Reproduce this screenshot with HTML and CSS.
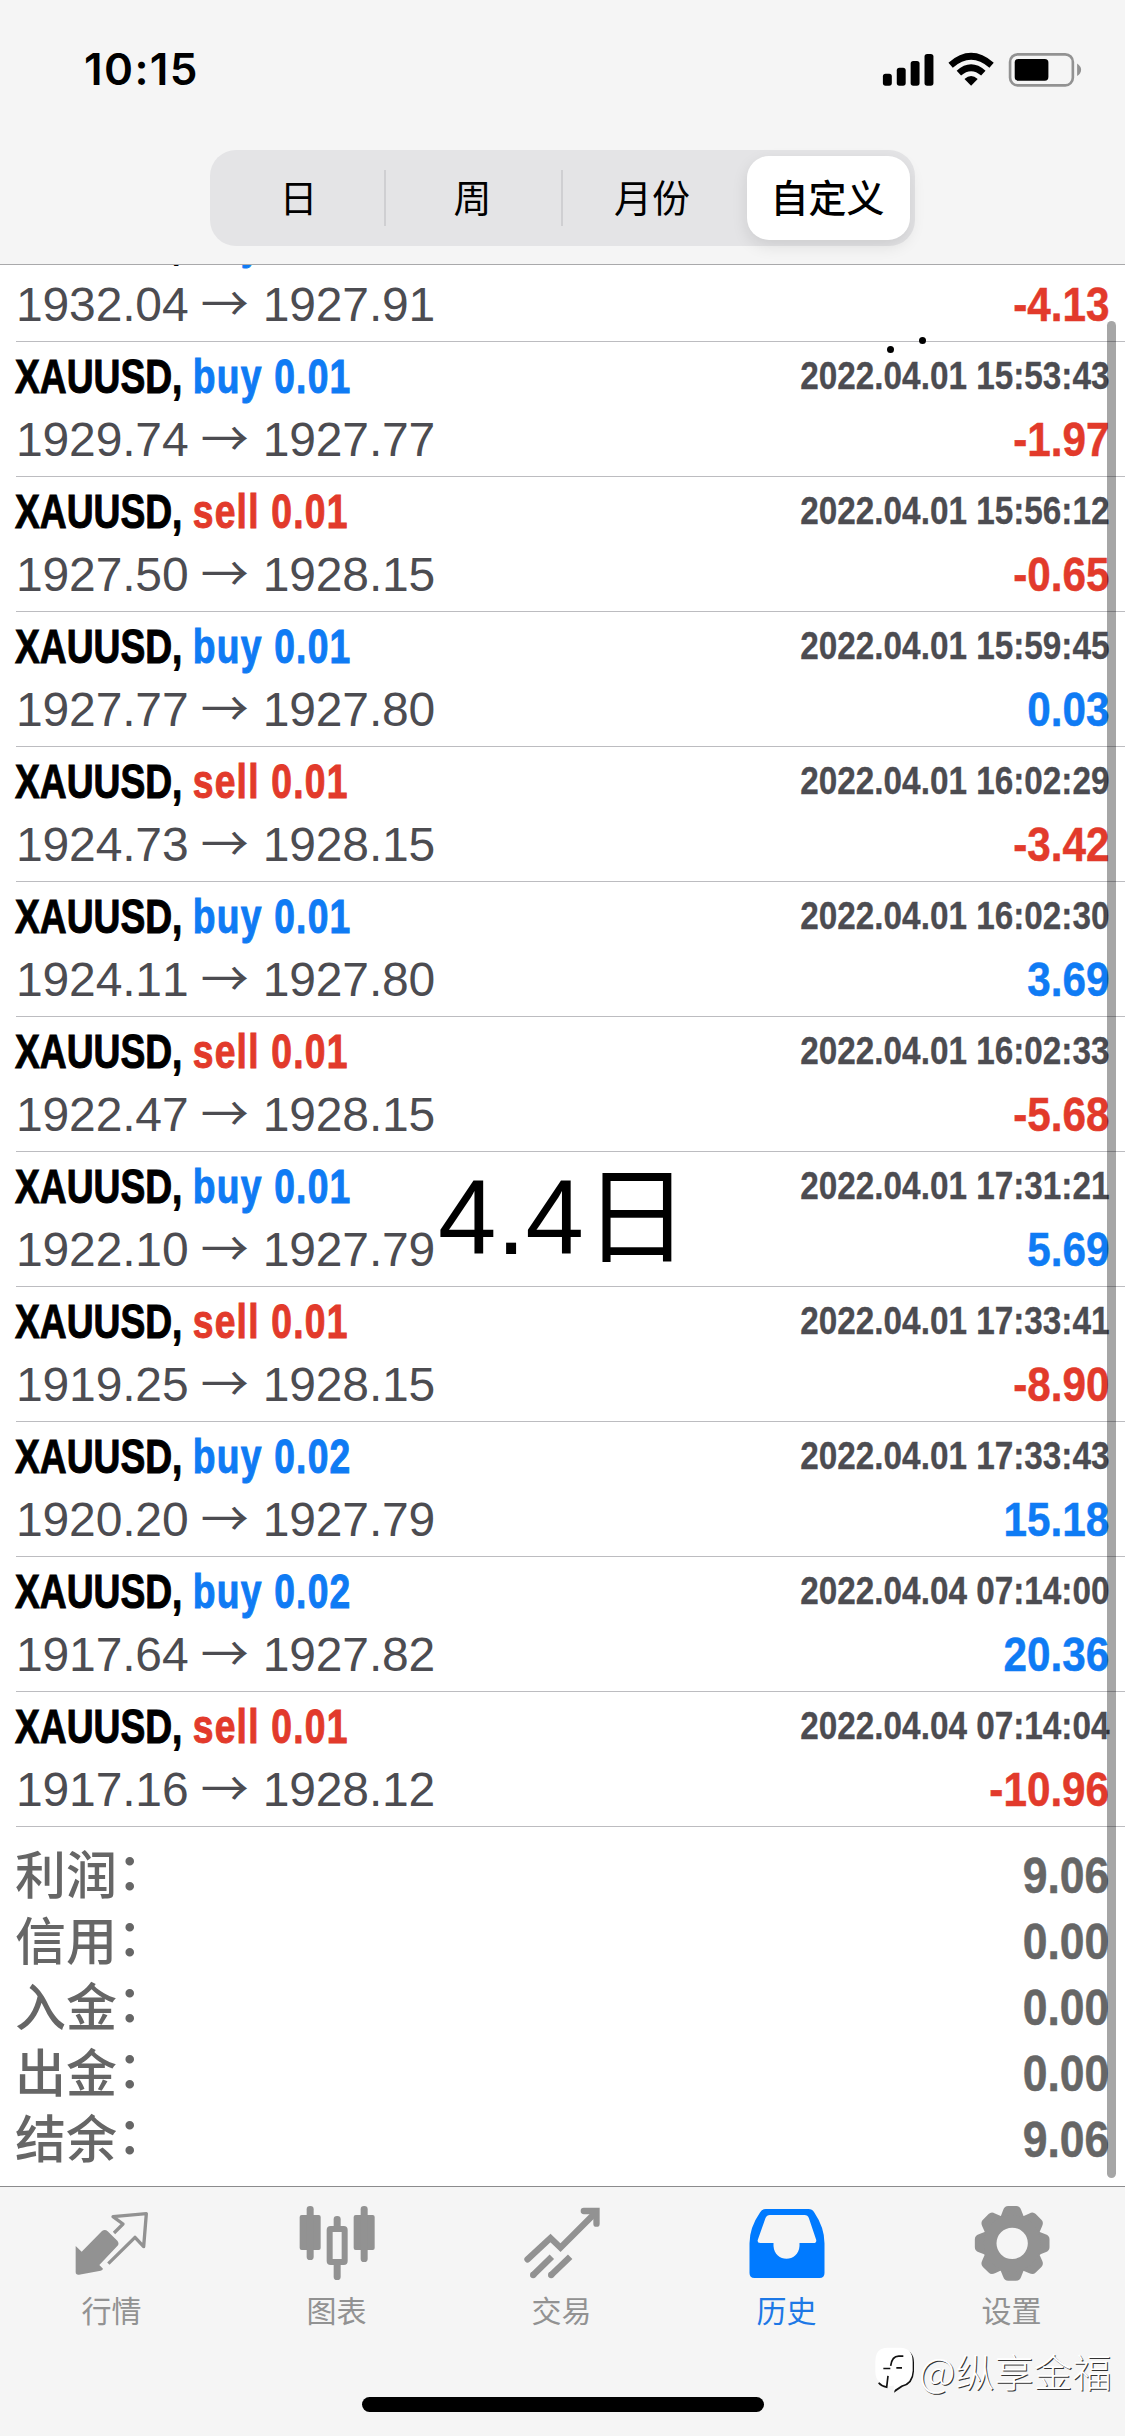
FILE: index.html
```html
<!DOCTYPE html>
<html lang="zh-CN">
<head>
<meta charset="utf-8">
<title>历史</title>
<link rel="stylesheet" href="styles.css">
</head>
<body>
<div class="screen">
  <header class="header">
    <div class="status">
      <span class="time">10:15</span>
      <svg class="status-icons" viewBox="60 60 612 112">
        <g fill="#000">
          <rect x="66" y="129" width="27" height="36" rx="8"/>
          <rect x="108" y="111" width="27" height="54" rx="8"/>
          <rect x="150" y="90" width="27" height="75" rx="8"/>
          <rect x="192" y="69" width="27" height="96" rx="8"/>
          <path d="M333 165 L313 145 Q333 126 353 145Z"/>
        </g>
        <g fill="none" stroke="#000" stroke-width="20">
          <path d="M296 127 Q333 94 370 127"/>
          <path d="M271 103 Q333 49 395 103"/>
        </g>
        <rect x="451" y="70" width="190" height="94" rx="23" fill="none" stroke="#929292" stroke-width="8"/>
        <rect x="465" y="84" width="102" height="66" rx="11" fill="#000"/>
        <path d="M654 98 Q666 106 666 117 Q666 128 654 136Z" fill="#929292"/>
      </svg>
    </div>
    <nav class="segments">
      <span class="segment">日</span>
      <span class="segment">周</span>
      <span class="segment">月份</span>
      <span class="segment selected">自定义</span>
    </nav>
  </header>

  <main class="history">
    <ul class="deals">
      <li class="deal"><div class="line"><span class="title">XAUUSD, <b class="buy">buy 0.01</b></span></div><div class="line"><span class="price">1932.04 <i>→</i> 1927.91</span><span class="amount loss">-4.13</span></div></li>
      <li class="deal"><div class="line"><span class="title">XAUUSD, <b class="buy">buy 0.01</b></span><span class="date">2022.04.01 15:53:43</span></div><div class="line"><span class="price">1929.74 <i>→</i> 1927.77</span><span class="amount loss">-1.97</span></div></li>
      <li class="deal"><div class="line"><span class="title">XAUUSD, <b class="sell">sell 0.01</b></span><span class="date">2022.04.01 15:56:12</span></div><div class="line"><span class="price">1927.50 <i>→</i> 1928.15</span><span class="amount loss">-0.65</span></div></li>
      <li class="deal"><div class="line"><span class="title">XAUUSD, <b class="buy">buy 0.01</b></span><span class="date">2022.04.01 15:59:45</span></div><div class="line"><span class="price">1927.77 <i>→</i> 1927.80</span><span class="amount gain">0.03</span></div></li>
      <li class="deal"><div class="line"><span class="title">XAUUSD, <b class="sell">sell 0.01</b></span><span class="date">2022.04.01 16:02:29</span></div><div class="line"><span class="price">1924.73 <i>→</i> 1928.15</span><span class="amount loss">-3.42</span></div></li>
      <li class="deal"><div class="line"><span class="title">XAUUSD, <b class="buy">buy 0.01</b></span><span class="date">2022.04.01 16:02:30</span></div><div class="line"><span class="price">1924.11 <i>→</i> 1927.80</span><span class="amount gain">3.69</span></div></li>
      <li class="deal"><div class="line"><span class="title">XAUUSD, <b class="sell">sell 0.01</b></span><span class="date">2022.04.01 16:02:33</span></div><div class="line"><span class="price">1922.47 <i>→</i> 1928.15</span><span class="amount loss">-5.68</span></div></li>
      <li class="deal"><div class="line"><span class="title">XAUUSD, <b class="buy">buy 0.01</b></span><span class="date">2022.04.01 17:31:21</span></div><div class="line"><span class="price">1922.10 <i>→</i> 1927.79</span><span class="amount gain">5.69</span></div></li>
      <li class="deal"><div class="line"><span class="title">XAUUSD, <b class="sell">sell 0.01</b></span><span class="date">2022.04.01 17:33:41</span></div><div class="line"><span class="price">1919.25 <i>→</i> 1928.15</span><span class="amount loss">-8.90</span></div></li>
      <li class="deal"><div class="line"><span class="title">XAUUSD, <b class="buy">buy 0.02</b></span><span class="date">2022.04.01 17:33:43</span></div><div class="line"><span class="price">1920.20 <i>→</i> 1927.79</span><span class="amount gain">15.18</span></div></li>
      <li class="deal"><div class="line"><span class="title">XAUUSD, <b class="buy">buy 0.02</b></span><span class="date">2022.04.04 07:14:00</span></div><div class="line"><span class="price">1917.64 <i>→</i> 1927.82</span><span class="amount gain">20.36</span></div></li>
      <li class="deal"><div class="line"><span class="title">XAUUSD, <b class="sell">sell 0.01</b></span><span class="date">2022.04.04 07:14:04</span></div><div class="line"><span class="price">1917.16 <i>→</i> 1928.12</span><span class="amount loss">-10.96</span></div></li>
    </ul>
    <dl class="summary">
      <div class="total"><dt>利润<span class="colon">：</span></dt><dd>9.06</dd></div>
      <div class="total"><dt>信用<span class="colon">：</span></dt><dd>0.00</dd></div>
      <div class="total"><dt>入金<span class="colon">：</span></dt><dd>0.00</dd></div>
      <div class="total"><dt>出金<span class="colon">：</span></dt><dd>0.00</dd></div>
      <div class="total"><dt>结余<span class="colon">：</span></dt><dd>9.06</dd></div>
    </dl>
  </main>

  <nav class="tabbar">
    <div class="tab">
      <svg class="tab-icon" viewBox="31 39 252 252">
        <path d="M45 168 L63 185 L124 123 Q133 116 141 124 L170 152 Q177 161 170 168 L116 225 L127 236 Q126 241 120 242 L55 254 Q45 255 45 246Z" fill="#929292"/>
        <path d="M160 129 L187 102 L157 80 L257 71 L249 170 L223 142 L143 221" fill="none" stroke="#929292" stroke-width="10" stroke-linejoin="round"/>
      </svg>
      <span class="tab-label">行情</span>
    </div>
    <div class="tab">
      <svg class="tab-icon" viewBox="706 39 252 252" fill="#929292">
        <rect x="717" y="75" width="63" height="105" rx="6"/><rect x="738" y="48" width="21" height="162" rx="10"/>
        <rect x="879" y="75" width="63" height="105" rx="6"/><rect x="900" y="48" width="21" height="168" rx="10"/>
        <rect x="819" y="78" width="21" height="40" rx="10"/><rect x="819" y="212" width="21" height="58" rx="10"/>
        <rect x="807" y="117" width="45" height="99" rx="3" fill="#f5f5f5" stroke="#929292" stroke-width="18"/>
      </svg>
      <span class="tab-label">图表</span>
    </div>
    <div class="tab">
      <svg class="tab-icon" viewBox="61.500 39 252 252" fill="none" stroke="#929292" stroke-width="19" stroke-linecap="round">
        <path d="M81 208 L150 144 L180 173 L284 69"/>
        <path d="M250 63 H288 V101"/>
        <g stroke-linecap="butt"><path d="M98 255 L154 200 M152 255 L209 200"/></g>
        <path d="M98 255 h.1 M152 255 h.1"/>
      </svg>
      <span class="tab-label">交易</span>
    </div>
    <div class="tab active">
      <svg class="tab-icon" viewBox="736.500 39 252 252">
        <path fill="#007aff" fill-rule="evenodd" d="M796 57 H924 Q935 57 941 67 Q972 113 972 160 V249 Q972 264 957 264 H762 Q747 264 747 249 V160 Q747 113 779 67 Q785 57 796 57Z M808 75 Q799 75 795 84 L772 149 Q769 159 779 159 H819 V168 C822 219 894 219 897 168 V159 H939 Q949 159 947 149 L925 84 Q922 75 912 75Z"/>
      </svg>
      <span class="tab-label">历史</span>
    </div>
    <div class="tab">
      <svg class="tab-icon" viewBox="316.500 39 252 252" fill="#929292">
        <g id="teeth">
          <path id="tooth" d="M398 90 Q408 78 413 60 Q417 48 428 48 H452 Q463 48 467 60 Q472 78 483 90Z"/>
          <use href="#tooth" transform="rotate(45 440 160)"/><use href="#tooth" transform="rotate(90 440 160)"/><use href="#tooth" transform="rotate(135 440 160)"/><use href="#tooth" transform="rotate(180 440 160)"/><use href="#tooth" transform="rotate(225 440 160)"/><use href="#tooth" transform="rotate(270 440 160)"/><use href="#tooth" transform="rotate(315 440 160)"/>
        </g>
        <circle cx="440" cy="160" r="66" fill="none" stroke="#929292" stroke-width="38"/>
      </svg>
      <span class="tab-label">设置</span>
    </div>
  </nav>

  <div class="scrollbar"></div>
  <div class="note">4.4<span>日</span></div>
  <i class="speck speck-a"></i>
  <i class="speck speck-b"></i>
  <div class="watermark">
    <svg class="mark" viewBox="30 486 126 146">
      <path d="M72 495 H108 Q150 495 150 535 V562 Q148 600 116 608 L90 626 L95 606 Q120 590 132 560 L132 520Z" fill="#111"/>
      <path d="M70 491 H108 Q146 491 146 533 V560 Q144 597 112 604 L88 620 L90 604 L74 606 Q34 600 34 562 V533 Q34 491 70 491Z" fill="#fff"/>
      <path d="M118 516 H104 Q84 516 80 545 M58 553 H79 M97 551 H114 M72 575 L68 609 Q52 606 44 596" fill="none" stroke="#111" stroke-width="5"/>
    </svg>
    <span><span class="at">@</span>纵享金福</span>
  </div>
  <div class="home"></div>
</div>
</body>
</html>
```
FILE: styles.css
```css
* { box-sizing: border-box; margin: 0; padding: 0; }

body {
  width: 1125px;
  height: 2436px;
  overflow: hidden;
  background: #fff;
  font-family: "Liberation Sans", "Noto Sans CJK SC", sans-serif;
  font-kerning: none;
}

.screen {
  position: relative;
  display: flex;
  flex-direction: column;
  width: 1125px;
  height: 2436px;
  overflow: hidden;
}

.header {
  position: relative;
  z-index: 1;
  display: flex;
  flex-direction: column;
  align-items: center;
  height: 265px;
  border-bottom: 1px solid #a9a9ab;
  background: #f5f5f5;
}

.status {
  display: flex;
  justify-content: space-between;
  align-items: center;
  width: 100%;
  height: 138px;
  padding: 0 41px 0 84px;
}

.time {
  font: 600 44px/60px Inter, sans-serif;
  letter-spacing: 1.400px;
}

.status-icons { width: 204px; height: 37px; }

.segments {
  display: flex;
  align-items: center;
  width: 705px;
  height: 96px;
  margin-top: 12px;
  padding: 6px 5px;
  border-radius: 26px;
  background: #e4e4e6;
}

.segment {
  display: flex;
  justify-content: center;
  align-items: center;
  width: 177px;
  height: 56px;
  padding: 0 2px 5px 0;
  border-right: 2px solid #cfcfd2;
  font: 400 38px/50px "Noto Sans CJK SC", sans-serif;
}

.segment:nth-child(1) { width: 171px; }
.segment:nth-child(3) { border-right: 0; width: 184px; padding-right: 6px; }

.segment.selected {
  width: 163px;
  height: 84px;
  border: 0;
  border-radius: 22px;
  background: #fff;
  box-shadow: 0 6px 16px rgba(0, 0, 0, .1);
  font-weight: 500;
}

.history { flex: 1; margin-top: -58px; }

.deals { list-style: none; padding-left: 16px; }

.deal {
  display: flex;
  flex-direction: column;
  gap: 3px;
  height: 135px;
  padding: 5px 16px 0 0;
  border-bottom: 1px solid #bcbcc0;
}

.line {
  display: flex;
  justify-content: space-between;
  height: 60px;
  line-height: 60px;
  font-size: 48px;
  white-space: nowrap;
}

.title {
  margin-left: -1px;
  font-weight: 700;
  -webkit-text-stroke: 1px currentColor;
  transform: scaleX(.775);
  transform-origin: left;
}

.title b { letter-spacing: 1.600px; }

.buy, .gain { color: #0f7bf4; }
.sell, .loss { color: #e23a2b; }

.date {
  color: #4c4c51;
  font-size: 38.500px;
  font-weight: 700;
  line-height: 58px;
  -webkit-text-stroke: .3px currentColor;
  transform: scaleX(.865);
  transform-origin: right;
}

.price { color: #4c4c51; letter-spacing: -.15px; }

.price i {
  font-family: "Noto Sans CJK SC", sans-serif;
  font-style: normal;
  line-height: 1;
  margin: 0 1px 0 -1px;
}

.amount {
  font-weight: 700;
  -webkit-text-stroke: .5px currentColor;
  transform: scaleX(.88);
  transform-origin: right;
}

.summary { padding: 16px 16px 0 15px; color: #666; }

.total {
  display: flex;
  justify-content: space-between;
  height: 66px;
  line-height: 66px;
}

.total dt { margin-top: -4px; font: 500 51px/66px "Noto Sans CJK SC", sans-serif; }

.colon { position: relative; top: -4px; }

.total dd {
  font-size: 50px;
  font-weight: 700;
  -webkit-text-stroke: .5px currentColor;
  transform: scaleX(.89);
  transform-origin: right;
}

.tabbar {
  display: flex;
  height: 250px;
  border-top: 1px solid #8b8b8d;
  background: #f5f5f5;
}

.tab {
  display: flex;
  flex-direction: column;
  align-items: center;
  width: 225px;
  padding-top: 16px;
  color: #929292;
}

.tab-icon { width: 84px; height: 84px; }

.tab-label { font: 400 30px/44px "Noto Sans CJK SC", sans-serif; margin: 0 2px 0 0; }

.active { color: #1d78e6; }

.scrollbar {
  position: absolute;
  z-index: 2;
  left: 1107px;
  top: 321px;
  width: 9px;
  height: 1857px;
  border-radius: 5px;
  background: rgba(0, 0, 0, .35);
}

.note {
  position: absolute;
  left: 438px;
  top: 1156px;
  font-size: 105px;
  line-height: 120px;
}

.note span { font-family: "Noto Sans CJK SC", sans-serif; line-height: 1; }

.speck {
  position: absolute;
  z-index: 2;
  width: 7px;
  height: 7px;
  border-radius: 50%;
  background: #000;
}

.speck-a { left: 887px; top: 346px; }
.speck-b { left: 919px; top: 337px; }

.watermark {
  position: absolute;
  left: 874px;
  top: 2345px;
  display: flex;
  align-items: center;
  gap: 3px;
  color: #fff;
  font: 300 39px/50px "Noto Sans CJK SC", sans-serif;
  text-shadow: 1px 1px 0 #333;
  white-space: nowrap;
}

.at { font-size: 40px; }

.mark { width: 42px; height: 49px; }

.home {
  position: absolute;
  left: 362px;
  top: 2397px;
  width: 402px;
  height: 15px;
  border-radius: 8px;
  background: #000;
}
```
